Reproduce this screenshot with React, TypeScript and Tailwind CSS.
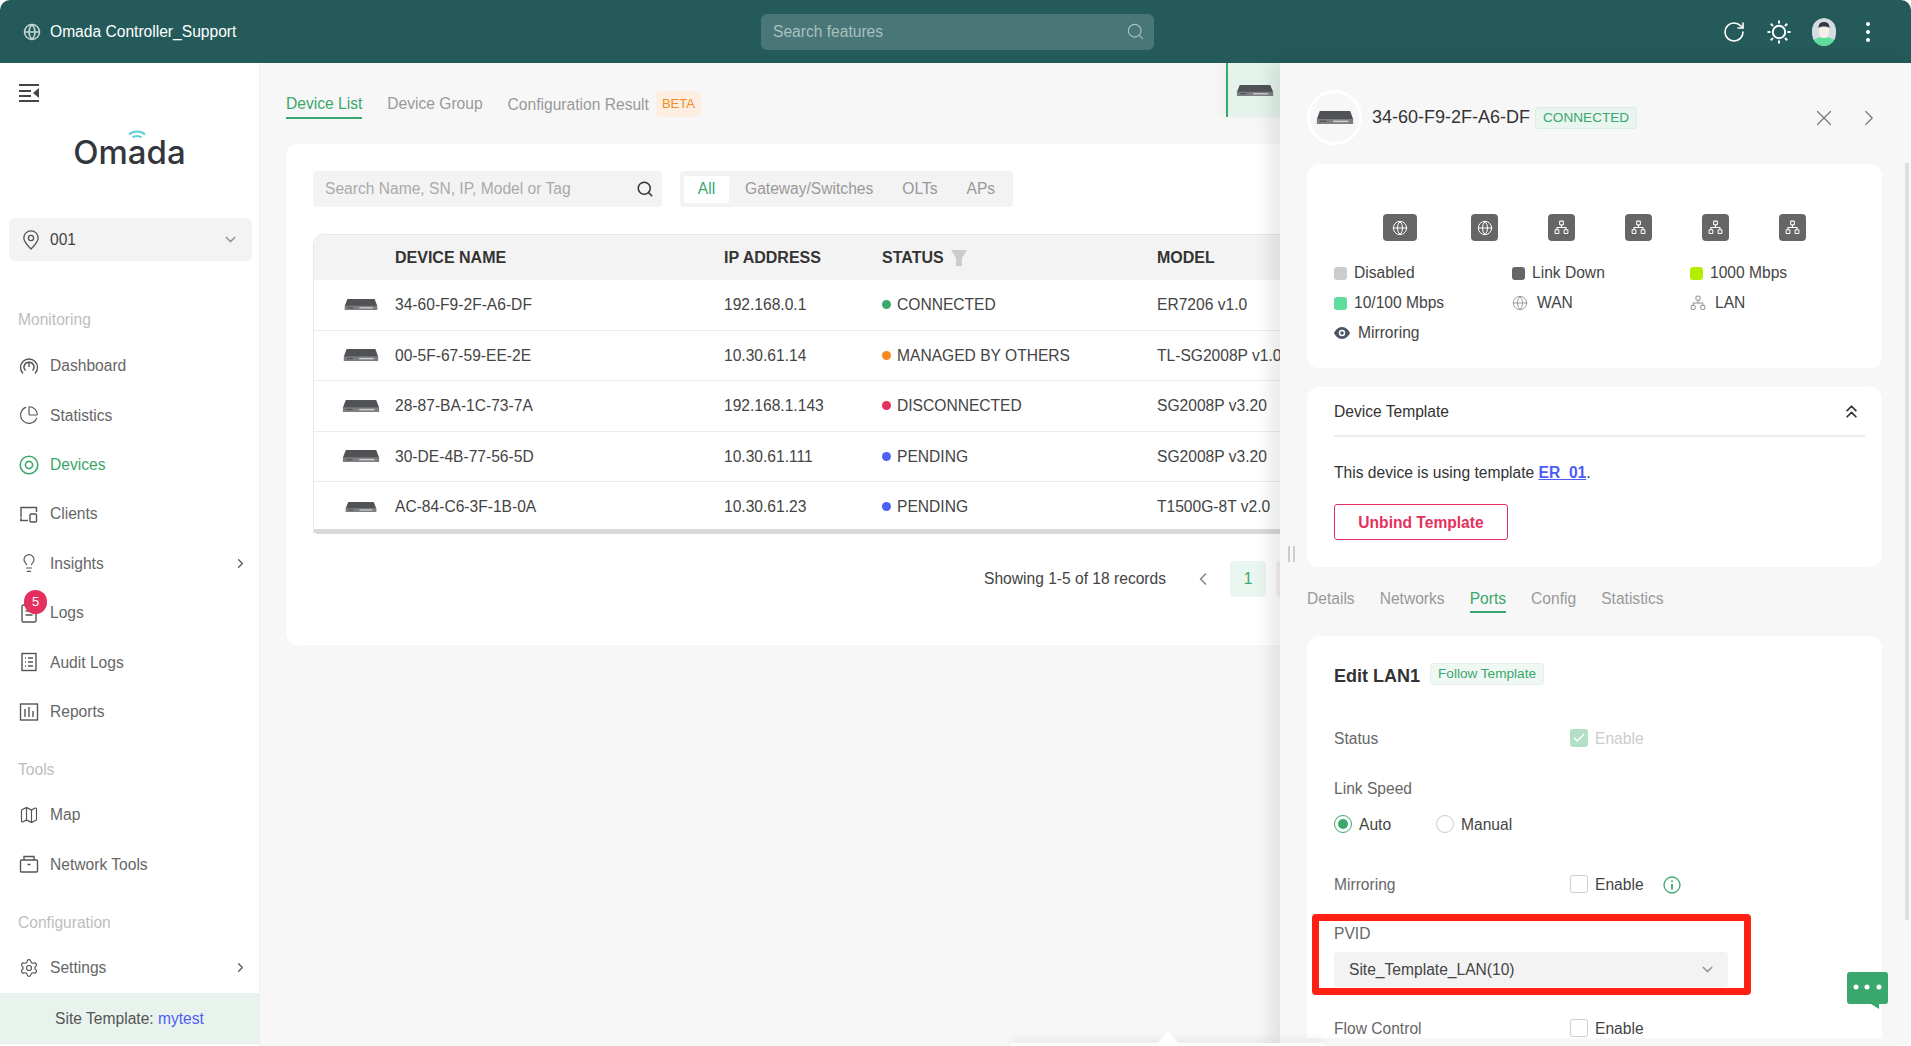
import React from "react";
import { ChevronDown, ChevronRight, ChevronLeft, ChevronsUp, X, Search, RotateCw, Check, Globe, PieChart, Lightbulb, Map, Settings } from "lucide-react";

const font = "font-['Liberation_Sans',Arial,sans-serif]";

function Gateway({ className }: { className: string }) {
  return (
    <svg viewBox="0 0 40 13" className={className} preserveAspectRatio="none">
      <path d="M4 0h32l3 8v5H1V8z" fill="#505256" />
      <rect x="1" y="8" width="38" height="5" fill="#7c7e82" />
      <rect x="18" y="9.6" width="16" height="1.6" fill="#cfcfcf" />
      <rect x="4" y="9.6" width="7" height="1.4" fill="#55575a" />
    </svg>
  );
}

type IconProps = { size?: number; strokeWidth?: number; className?: string };

function Svg({ size = 20, strokeWidth = 1.4, className, children }: IconProps & { children: React.ReactNode }) {
  return (
    <svg width={size} height={size} viewBox="0 0 20 20" fill="none" stroke="currentColor" strokeWidth={strokeWidth} className={className}>
      {children}
    </svg>
  );
}

const DashIcon = (p: IconProps) => <Svg {...p}><path d="M4 17.5A8.5 8.5 0 1 1 16 17.5" /><path d="M6.5 14.5A4.8 4.8 0 0 1 10 6.2a4.8 4.8 0 0 1 3.5 8.3" /><path d="M10 7v4" /></Svg>;
const DevicesIcon = (p: IconProps) => <Svg {...p} strokeWidth={1.6}><circle cx="10" cy="10" r="8.8" /><circle cx="10" cy="10" r="3.6" /></Svg>;
const ClientsIcon = (p: IconProps) => <Svg {...p}><path d="M2 13V3.5h15.5V8" /><path d="M1 16.5h8" /><rect x="11" y="10" width="6.5" height="8" rx="1" /><path d="M2 13.5v3" /></Svg>;
const LogsIcon = (p: IconProps) => <Svg {...p}><rect x="3" y="2" width="14" height="17" rx="1.5" /><path d="M6.5 8h7M6.5 12h7" /></Svg>;
const AuditIcon = (p: IconProps) => <Svg {...p}><rect x="3" y="1.5" width="14" height="17" /><path d="M6 6h1M9 6h5M6 10h1M9 10h5M6 14h1M9 14h5" /></Svg>;
const ReportsIcon = (p: IconProps) => <Svg {...p}><rect x="1.5" y="2" width="17" height="16" /><path d="M6 7v8M10 5v10M14 9v6" /></Svg>;
const ToolsIcon = (p: IconProps) => <Svg {...p}><rect x="1.5" y="6" width="17" height="12" rx="1" /><path d="M5 6V2.5h10V6M8.5 10.5h3" /></Svg>;
const PinIcon = (p: IconProps) => <Svg {...p}><path d="M10 19C6 15 2.8 11.5 2.8 8a7.2 7.2 0 0 1 14.4 0c0 3.5-3.2 7-7.2 11z" /><circle cx="10" cy="8" r="2.6" /></Svg>;
const LanIcon = (p: IconProps) => <Svg {...p}><rect x="7.5" y="1.5" width="5" height="5" rx=".8" /><rect x="1.5" y="13" width="5" height="5" rx=".8" /><rect x="13.5" y="13" width="5" height="5" rx=".8" /><path d="M10 6.5v3.5M4 13v-3h12v3" /></Svg>;
const SunIcon = () => (
  <svg width="26" height="26" viewBox="0 0 26 26" fill="none" stroke="white" strokeWidth="2">
    <circle cx="13" cy="13" r="6.2" />
    <path d="M13 1.5v3M13 21.5v3M1.5 13h3M21.5 13h3M4.8 4.8l2.2 2.2M19 19l2.2 2.2M4.8 21.2L7 19M19 7l2.2-2.2" />
  </svg>
);
const Avatar = () => (
  <svg width="24" height="28" viewBox="0 0 24 28" className="rounded-full">
    <rect width="24" height="28" fill="#d5dbe2" />
    <path d="M0 28c0-7 5-9 12-9s12 2 12 9z" fill="#5fdd9d" />
    <rect x="7" y="7" width="10" height="13" rx="4.5" fill="#f6efec" />
    <path d="M6.5 10c0-4 2-6 5.5-6s5.5 2 5.500 6c-2-2-9-2-11 0z" fill="#2f3a42" />
  </svg>
);

const monitoring = [
  { label: "Dashboard", Icon: DashIcon },
  { label: "Statistics", Icon: PieChart },
  { label: "Devices", Icon: DevicesIcon, active: true },
  { label: "Clients", Icon: ClientsIcon },
  { label: "Insights", Icon: Lightbulb, more: true },
  { label: "Logs", Icon: LogsIcon, badge: 5 },
  { label: "Audit Logs", Icon: AuditIcon },
  { label: "Reports", Icon: ReportsIcon },
];

function NavItem({ label, Icon, active, more, badge }: { label: string; Icon: any; active?: boolean; more?: boolean; badge?: number }) {
  return (
    <div className={`relative flex h-[49.4px] items-center pl-[19px] pr-[11px] text-[15.6px] ${active ? "text-[#3aa76d]" : "text-[#666]"}`}>
      <Icon size={20} strokeWidth={1.4} className={active ? "text-[#3aa76d]" : "text-[#555]"} />
      <span className="ml-[11px] flex-1">{label}</span>
      {more && <ChevronRight size={15} className="text-[#555]" />}
      {badge && <span className="absolute left-[24px] top-[2px] flex h-[24px] w-[23px] items-center justify-center rounded-full bg-[#e5305f] text-[13px] text-white">{badge}</span>}
    </div>
  );
}

function Sidebar() {
  return (
    <aside className="relative flex w-[260px] shrink-0 flex-col border-r border-[#eee] bg-white">
      <div className="pl-[19px] pt-[20px]">
        <svg width="22" height="20" viewBox="0 0 22 20" fill="#444"><rect x="0" y="1" width="20" height="2"/><rect x="0" y="7" width="12" height="2"/><rect x="0" y="12" width="12" height="2"/><rect x="0" y="17" width="20" height="2"/><path d="M20 5v10l-6-5z"/></svg>
      </div>
      <div className="relative mt-[32px] flex h-[36px] items-center justify-center text-[33px] font-medium leading-none text-[#33373d] font-['Inter',sans-serif]">
        Omada
        <svg width="18" height="8" viewBox="0 0 18 8" fill="none" stroke="#5fcfdc" strokeWidth="2" className="absolute left-[128px] top-[-5px]">
          <path d="M1 4.5C5 .5 13 .5 17 4.5" />
          <path d="M4.5 7.5c2.5-2 6.5-2 9 0" />
        </svg>
      </div>
      <div className="ml-[9px] mr-[7px] mt-[49px] flex h-[45px] items-center rounded-[6px] bg-[#f3f3f3] pl-[12px] pr-[13px] text-[15.6px] text-[#444]">
        <PinIcon size={20} strokeWidth={1.3} className="text-[#555]" />
        <span className="ml-[9px] flex-1">001</span>
        <ChevronDown size={17} className="text-[#999]" />
      </div>
      <div className="mt-[50px] pl-[18px] text-[15.6px] leading-[18px] text-[#bdbdbd]">Monitoring</div>
      <div className="mt-[12px]">{monitoring.map((m) => <NavItem key={m.label} {...m} />)}</div>
      <div className="mt-[25px] pl-[18px] text-[15.6px] leading-[18px] text-[#bdbdbd]">Tools</div>
      <div className="mt-[11px]">
        <NavItem label="Map" Icon={Map} />
        <NavItem label="Network Tools" Icon={ToolsIcon} />
      </div>
      <div className="mt-[25px] pl-[18px] text-[15.6px] leading-[18px] text-[#bdbdbd]">Configuration</div>
      <div className="mt-[11px]"><NavItem label="Settings" Icon={Settings} more /></div>
      <div className="mt-auto mb-[2px] flex h-[54px] items-center justify-center bg-[#e9f3ee] text-[15.6px] text-[#555]">Site Template:&nbsp;<span className="text-[#4d5cf5]">mytest</span></div>
    </aside>
  );
}

const rows = [
  { mac: "34-60-F9-2F-A6-DF", ip: "192.168.0.1", status: "CONNECTED", dot: "bg-[#3aa76d]", model: "ER7206 v1.0", icon: "ml-[30px] mr-[17px] h-[11px] w-[34px]" },
  { mac: "00-5F-67-59-EE-2E", ip: "10.30.61.14", status: "MANAGED BY OTHERS", dot: "bg-[#f58a1f]", model: "TL-SG2008P v1.0", icon: "ml-[29px] mr-[16px] h-[12px] w-[36px]" },
  { mac: "28-87-BA-1C-73-7A", ip: "192.168.1.143", status: "DISCONNECTED", dot: "bg-[#e5305f]", model: "SG2008P v3.20", icon: "ml-[28px] mr-[15px] h-[12px] w-[38px]" },
  { mac: "30-DE-4B-77-56-5D", ip: "10.30.61.111", status: "PENDING", dot: "bg-[#4d62f5]", model: "SG2008P v3.20", icon: "ml-[28px] mr-[15px] h-[12px] w-[38px]" },
  { mac: "AC-84-C6-3F-1B-0A", ip: "10.30.61.23", status: "PENDING", dot: "bg-[#4d62f5]", model: "T1500G-8T v2.0", icon: "ml-[31px] mr-[18px] h-[10px] w-[32px]" },
];

function Main() {
  return (
    <main className="relative min-w-0 flex-1 overflow-hidden bg-[#f7f7f7] pl-[26px] text-[15.6px]">
      <div className="flex h-[81px] items-start gap-[25px] pt-[29px] text-[#999]">
        <span className="border-b-2 border-[#3aa76d] pb-[2px] text-[#3aa76d]">Device List</span>
        <span>Device Group</span>
        <span className="flex items-center">Configuration Result<span className="-mt-[1px] ml-[7px] rounded-[3px] bg-[#fcefe2] px-[6px] py-[3px] text-[13px] text-[#f58a1f]">BETA</span></span>
      </div>
      <div className="h-[501px] w-[1100px] rounded-l-[12px] bg-white pl-[27px] pt-[27px]">
        <div className="flex gap-[18px]">
          <div className="flex h-[36px] w-[349px] items-center justify-between rounded-[4px] bg-[#f3f3f3] pl-[12px] pr-[8px] text-[#aaa]">
            Search Name, SN, IP, Model or Tag
            <Search size={18} className="text-[#333]" />
          </div>
          <div className="flex h-[36px] items-center rounded-[4px] bg-[#f3f3f3] pl-[4px] pr-[18px] text-[#999]">
            <span className="flex h-[27px] w-[45px] items-center justify-center rounded-[2px] bg-white text-[#3aa76d]">All</span>
            <span className="ml-[16px]">Gateway/Switches</span>
            <span className="ml-[29px]">OLTs</span>
            <span className="ml-[29px]">APs</span>
          </div>
        </div>
        <div className="mt-[27px] rounded-tl-[10px] border-l border-t border-[#e8e8e8]">
          <div className="flex h-[45px] items-center rounded-tl-[10px] bg-[#f3f3f3] text-[16px] font-bold text-[#333]">
            <span className="ml-[81px] w-[329px]">DEVICE NAME</span>
            <span className="w-[158px]">IP ADDRESS</span>
            <span className="flex w-[275px] items-center">STATUS<svg viewBox="0 0 16 16" className="ml-[7px] h-[16px] w-[16px]" fill="#ccc"><path d="M0 0h16l-5 8v8H5V8z"/></svg></span>
            <span>MODEL</span>
          </div>
          {rows.map((r, i) => (
            <div key={r.mac} className={`flex items-center text-[#444] ${i < 4 ? "h-[50.5px] border-b border-[#ececec]" : "h-[47px] pt-[2px]"}`}>
              <Gateway className={r.icon} />
              <span className="w-[329px]">{r.mac}</span>
              <span className="w-[158px]">{r.ip}</span>
              <span className="flex w-[275px] items-center"><i className={`mr-[6px] h-[9px] w-[9px] rounded-full ${r.dot}`} />{r.status}</span>
              <span className="whitespace-nowrap">{r.model}</span>
            </div>
          ))}
          <div className="h-[5px] rounded-bl-[4px] bg-[#d9d9d9]" />
        </div>
        <div className="mt-[27px] flex items-center pl-[671px] text-[#444]">
          Showing 1-5 of 18 records
          <ChevronLeft size={20} className="ml-[27px] text-[#888]" />
          <span className="ml-[17px] flex h-[36px] w-[36px] items-center justify-center rounded-[4px] bg-[#e9f5ef] text-[#3aa76d]">1</span>
          <span className="ml-[10px] h-[36px] w-[36px] rounded-[4px] bg-[#f3f3f3]" />
        </div>
      </div>
      {/* tab of the open device, pinned over the page */}
      <div className="absolute right-0 top-0 flex h-[54px] w-[54px] items-center justify-center border-l-2 border-[#3aa76d] bg-[#e4f3ec] pl-[2px] shadow-[-6px_0_10px_rgba(0,0,0,0.04)]">
        <Gateway className="h-[11px] w-[38px]" />
      </div>
    </main>
  );
}

const ports = ["w", "w", "l", "l", "l", "l"];

function Field({ label, children }: { label: string; children?: React.ReactNode }) {
  return (
    <div className="flex h-[40px] items-center">
      <span className="w-[236px] text-[#666]">{label}</span>
      {children}
    </div>
  );
}

function Box() {
  return <i className="h-[18px] w-[18px] rounded-[3px] border border-[#ccc] bg-white" />;
}

function Drawer() {
  return (
    <section className="relative flex w-[631px] shrink-0 flex-col rounded-br-[10px] bg-[#f7f7f7] pl-[27px] pr-[29px] text-[15.6px] text-[#444] shadow-[-10px_0_18px_rgba(0,0,0,0.09)]">
      <div className="flex h-[101px] items-center pt-[8px]">
        <div className="flex h-[55px] w-[55px] items-center justify-center rounded-full border-[3px] border-white"><Gateway className="h-[13px] w-[38px]" /></div>
        <span className="ml-[10px] text-[18px] text-[#333]">34-60-F9-2F-A6-DF</span>
        <span className="ml-[5px] rounded-[3px] border border-[#dceee4] bg-[#e9f5ef] px-[7px] text-[13.6px] leading-[20px] text-[#3aa76d]">CONNECTED</span>
        <X size={26} strokeWidth={1.1} className="ml-auto mr-[19px] text-[#777]" />
        <ChevronRight size={26} strokeWidth={1.1} className="text-[#777]" />
      </div>
      <div className="h-[204px] rounded-[12px] bg-white pl-[27px] pt-[50px]">
        <div className="flex items-center pl-[49px]">
          {ports.map((p, i) => (
            <span key={i} className={`flex h-[27px] items-center justify-center rounded-[4px] bg-[#666] text-white ${i === 0 ? "w-[34px]" : "w-[27px]"} ${i === 0 ? "" : i === 1 ? "ml-[54px]" : "ml-[50px]"}`}>
              {p === "w" ? <Globe size={16} strokeWidth={1.5} /> : <LanIcon size={15} strokeWidth={1.4} />}
            </span>
          ))}
        </div>
        <div className="mt-[22px] grid grid-cols-[178px_178px_1fr] gap-y-[10px] leading-[20px] text-[#444]">
          <span className="flex items-center gap-[7px]"><i className="h-[13px] w-[13px] rounded-[3px] bg-[#ccc]" />Disabled</span>
          <span className="flex items-center gap-[7px]"><i className="h-[13px] w-[13px] rounded-[3px] bg-[#666]" />Link Down</span>
          <span className="flex items-center gap-[7px]"><i className="h-[13px] w-[13px] rounded-[3px] bg-[#b5ec00]" />1000 Mbps</span>
          <span className="flex items-center gap-[7px]"><i className="h-[13px] w-[13px] rounded-[3px] bg-[#5fdd9d]" />10/100 Mbps</span>
          <span className="flex items-center gap-[9px]"><Globe size={16} strokeWidth={1.2} className="text-[#888]" />WAN</span>
          <span className="flex items-center gap-[9px]"><LanIcon size={16} strokeWidth={1.2} className="text-[#888]" />LAN</span>
          <span className="flex items-center gap-[8px]">
            <svg width="16" height="12" viewBox="0 0 16 12"><path d="M8 0c4 0 6.800 3.500 8 6-1.200 2.500-4 6-8 6S1.200 8.500 0 6c1.200-2.500 4-6 8-6z" fill="#4b5563" /><circle cx="8" cy="6" r="3.200" fill="white" /><circle cx="8" cy="6" r="1.800" fill="#4b5563" /></svg>
            Mirroring
          </span>
        </div>
      </div>
      <div className="mt-[19px] h-[180px] rounded-[12px] bg-white pl-[27px] pr-[17px]">
        <div className="flex h-[50px] items-center justify-between border-b-2 border-[#ececec] pt-[1px] text-[#333]">Device Template<ChevronsUp size={21} className="mr-[3px] text-[#333]" /></div>
        <p className="mt-[26px] leading-[20px] text-[#333]">This device is using template <a className="font-bold text-[#4d5cf5] underline">ER_01</a>.</p>
        <div className="mt-[21px] flex h-[36px] w-[174px] items-center justify-center rounded-[3px] border border-[#e5305f] pt-[1px] font-bold text-[#e5305f]">Unbind Template</div>
      </div>
      <div className="mt-[20px] flex gap-[25px] text-[#999]">
        <span>Details</span><span>Networks</span>
        <span className="border-b-2 border-[#3aa76d] pb-[1px] text-[#3aa76d]">Ports</span>
        <span>Config</span><span>Statistics</span>
      </div>
      <div className="mt-[23px] h-[402px] overflow-hidden rounded-t-[12px] bg-white pl-[27px] pr-[27px]">
        <div className="flex h-[82px] items-center pb-[2px]">
          <b className="text-[18px] text-[#333]">Edit LAN1</b>
          <span className="-mt-[4px] ml-[10px] rounded-[3px] border border-[#e3f1ea] bg-[#f0f8f4] px-[7px] text-[13.6px] leading-[20px] text-[#3aa76d]">Follow Template</span>
        </div>
        <Field label="Status">
          <span className="flex h-[18px] w-[18px] items-center justify-center rounded-[3px] bg-[#b3dfc6]"><Check size={14} strokeWidth={2.5} className="text-white" /></span>
          <span className="ml-[7px] text-[#ccc]">Enable</span>
        </Field>
        <div className="mt-[10px]"><Field label="Link Speed" /></div>
        <div className="flex h-[32px] items-center">
          <i className="flex h-[18px] w-[18px] items-center justify-center rounded-full border border-[#3aa76d]"><i className="h-[10px] w-[10px] rounded-full bg-[#3aa76d]" /></i>
          <span className="ml-[7px] w-[77px]">Auto</span>
          <i className="h-[18px] w-[18px] rounded-full border border-[#ccc]" />
          <span className="ml-[7px]">Manual</span>
        </div>
        <div className="mt-[24px]">
          <Field label="Mirroring">
            <Box />
            <span className="ml-[7px]">Enable</span>
            <svg width="18" height="18" viewBox="0 0 18 18" fill="none" stroke="#3aa76d" strokeWidth="1.300" className="ml-[19px] mt-[2px]"><circle cx="9" cy="9" r="8" /><path d="M9 8v5.500M9 4.500v1.500" strokeWidth="1.800" /></svg>
          </Field>
        </div>
        <div className="mt-[15px] leading-[30px] text-[#666]">PVID</div>
        <div className="mt-[3px] flex h-[35px] w-[394px] items-center justify-between rounded-[4px] bg-[#f3f3f3] pl-[15px] pr-[12px]">
          Site_Template_LAN(10)
          <ChevronDown size={17} className="text-[#999]" />
        </div>
        <div className="mt-[21px]">
          <Field label="Flow Control">
            <Box />
            <span className="ml-[7px]">Enable</span>
          </Field>
        </div>
      </div>
      {/* drag handle */}
      <div className="absolute left-[8px] top-[483px] flex gap-[3px]"><i className="h-[16px] w-[2px] bg-[#ccc]" /><i className="h-[16px] w-[2px] bg-[#ccc]" /></div>
      {/* scrollbar */}
      <div className="absolute right-[2px] top-[100px] h-[757px] w-[4px] bg-[#e0e0e0]" />
      {/* red annotation frame */}
      <div className="absolute left-[32px] top-[851px] h-[81px] w-[439px] rounded-[4px] border-[7px] border-[#ff2013]" />
      {/* chat button */}
      <svg width="41" height="37" viewBox="0 0 41 37" className="absolute left-[567px] top-[909px]">
        <path d="M3 0h35a3 3 0 0 1 3 3v26a3 3 0 0 1-3 3h-6v5l-8-5H3a3 3 0 0 1-3-3V3a3 3 0 0 1 3-3z" fill="#3aa76d" />
        <circle cx="9" cy="15" r="2.500" fill="white" /><circle cx="20" cy="15" r="2.500" fill="white" /><circle cx="32" cy="15" r="2.500" fill="white" />
      </svg>
    </section>
  );
}

export default function App() {
  return (
    <div className={`relative flex h-[1046px] w-[1911px] flex-col overflow-hidden bg-white ${font}`}>
      <header className="flex h-[63px] shrink-0 items-center rounded-t-[10px] bg-[#245a5a] pl-[23px] pr-[41px] text-white">
        <Globe size={18} className="text-[#c4d4d4]" />
        <span className="ml-[9px] w-[711px] text-[15.6px]">Omada Controller_Support</span>
        <div className="flex h-[36px] w-[393px] items-center justify-between rounded-[6px] bg-[#497676] pl-[12px] pr-[9px] text-[15.6px] text-[#a8c0c0]">Search features<Search size={19} strokeWidth={1.5} /></div>
        <RotateCw size={24} strokeWidth={1.6} className="ml-auto" />
        <span className="ml-[20px]"><SunIcon /></span>
        <span className="ml-[20px] flex h-[28px] w-[24px] overflow-hidden rounded-full"><Avatar /></span>
        <span className="ml-[30px] flex flex-col gap-[4px]"><i className="h-[4px] w-[4px] rounded-full bg-white" /><i className="h-[4px] w-[4px] rounded-full bg-white" /><i className="h-[4px] w-[4px] rounded-full bg-white" /></span>
      </header>
      <div className="flex min-h-0 flex-1">
        <Sidebar />
        <Main />
        <Drawer />
      </div>
      {/* bottom sheet handle peeking in at the page edge */}
      <div className="absolute bottom-0 left-[1010px] h-[3px] w-[315px] rounded-t-[3px] bg-white shadow-[0_-2px_8px_rgba(0,0,0,0.15)]" />
      <svg width="20" height="12" viewBox="0 0 20 12" className="absolute bottom-[3px] left-[1158px]"><path d="M10 0l10 12H0z" fill="white" /></svg>
    </div>
  );
}
